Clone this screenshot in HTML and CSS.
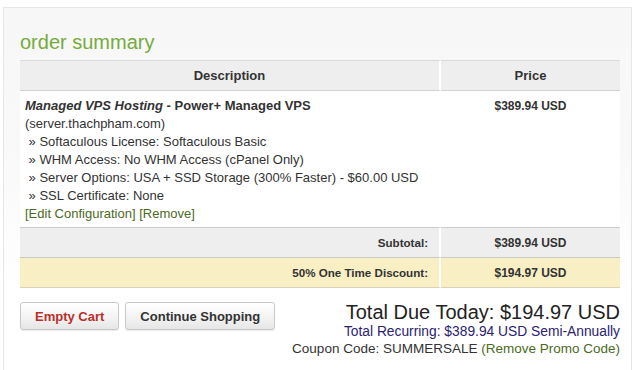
FILE: index.html
```html
<!DOCTYPE html>
<html>
<head>
<meta charset="utf-8">
<link rel="stylesheet" href="styles.css">
</head>
<body>
<div class="panel">
  <h2 class="title">order summary</h2>
  <table class="cart">
    <colgroup><col class="c-desc"><col class="c-price"></colgroup>
    <thead>
      <tr><th class="desc">Description</th><th class="price">Price</th></tr>
    </thead>
    <tbody>
      <tr class="item">
        <td class="desc">
          <div class="name"><b><i>Managed VPS Hosting</i> - Power+ Managed VPS</b></div>
          <div>(server.thachpham.com)</div>
          <div class="opt">&nbsp;» Softaculous License: Softaculous Basic</div>
          <div class="opt">&nbsp;» WHM Access: No WHM Access (cPanel Only)</div>
          <div class="opt">&nbsp;» Server Options: USA + SSD Storage (300% Faster) - $60.00 USD</div>
          <div class="opt">&nbsp;» SSL Certificate: None</div>
          <div><a class="lnk">[Edit Configuration]</a> <a class="lnk">[Remove]</a></div>
        </td>
        <td class="price top">$389.94 USD</td>
      </tr>
      <tr class="sub">
        <td class="label">Subtotal:</td><td class="price">$389.94 USD</td>
      </tr>
      <tr class="disc">
        <td class="label">50% One Time Discount:</td><td class="price">$194.97 USD</td>
      </tr>
    </tbody>
  </table>
  <div class="bottom">
    <div class="buttons">
      <button class="btn red">Empty Cart</button>
      <button class="btn">Continue Shopping</button>
    </div>
    <div class="totals">
      <div class="due">Total Due Today: $194.97 USD</div>
      <div class="rec">Total Recurring: $389.94 USD Semi-Annually</div>
      <div class="coupon">Coupon Code: SUMMERSALE <a class="lnk">(Remove Promo Code)</a></div>
    </div>
  </div>
</div>
</body>
</html>
```
FILE: styles.css
```css
html, body { margin: 0; padding: 0; background: #fff; }
body {
  font-family: "Liberation Sans", Arial, sans-serif;
  font-size: 13px;
  color: #333;
  padding: 7px 5px 0 3px;
}
.panel {
  border: 1px solid #e6e6e6;
  border-bottom: none;
  background: linear-gradient(#f7f7f7, #f9f9f9 40%, #fff 80%);
  padding: 22px 12px 13px 16px;
}
.title {
  margin: 0 0 6px 0;
  font-weight: normal;
  font-size: 20px;
  color: #76ab3c;
  line-height: 24px;
}
.cart {
  width: 600px;
  border-collapse: separate;
  border-spacing: 0;
  table-layout: fixed;
}
.c-desc { width: 421px; }
.c-price { width: 179px; }
.cart th {
  background: #eee;
  font-size: 13px;
  font-weight: bold;
  color: #333;
  height: 29px;
  padding: 0;
  border-top: 1px solid #d9d9d9;
  border-bottom: 1px solid #d3d3d3;
}
.cart th.desc, .cart td.desc, .cart td.label { border-right: 2px solid #fff; }
.cart td.price { text-align: center; font-weight: bold; font-size: 12px; }
.item td { background: #fff; vertical-align: top; padding: 6px 5px 4px; line-height: 18px; }
.name { font-size: 13px; }
.item td.top { padding-top: 6px; }
.lnk { color: #4b6a1e; cursor: pointer; }
.sub td, .disc td { height: 29px; padding: 0 11px; font-weight: bold; font-size: 11.6px; }
.sub td { background: #eee; border-top: 1px solid #ccc; border-bottom: 1px solid #c9c9c9; }
.disc td { background: #f8efc4; border-bottom: 1px solid #d8d3b8; }
.label { text-align: right; }
.bottom {
  display: flex;
  justify-content: space-between;
  margin-top: 14px;
  width: 600px;
}
.buttons { display: flex; gap: 6px; align-items: flex-start; }
.btn {
  font-family: "Liberation Sans", Arial, sans-serif;
  font-size: 13px;
  font-weight: bold;
  color: #333;
  height: 28px;
  padding: 0 14px;
  white-space: nowrap;
  border: 1px solid #c8c8c8;
  border-radius: 3px;
  background: linear-gradient(#fff, #f2f2f2 60%, #e6e6e6);
  box-shadow: 0 1px 1px rgba(0,0,0,0.08);
}
.btn.red { color: #b8302b; }
.totals { text-align: right; margin-top: -1px; white-space: nowrap; }
.due { font-size: 20px; color: #222; line-height: 22px; }
.rec { color: #2a2370; font-size: 13.8px; line-height: 17px; }
.coupon { color: #333; font-size: 13.5px; line-height: 18px; }
```
